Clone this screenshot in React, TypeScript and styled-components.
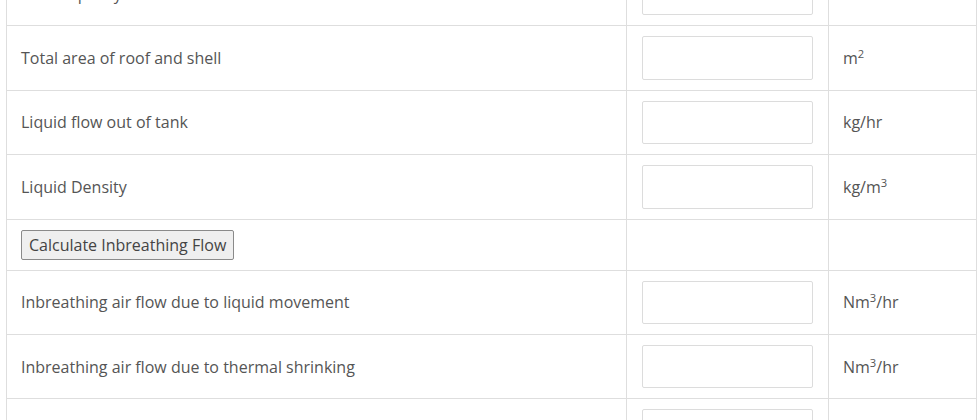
import React from 'react'
import styled, { createGlobalStyle } from 'styled-components'

interface Row {
  label: string
  unit?: React.ReactNode
  button?: string
}

const rows: Row[] = [
  { label: 'Tank capacity', unit: <>m<sup>3</sup></> },
  { label: 'Total area of roof and shell', unit: <>m<sup>2</sup></> },
  { label: 'Liquid flow out of tank', unit: 'kg/hr' },
  { label: 'Liquid Density', unit: <>kg/m<sup>3</sup></> },
  { label: '', button: 'Calculate Inbreathing Flow' },
  { label: 'Inbreathing air flow due to liquid movement', unit: <>Nm<sup>3</sup>/hr</> },
  { label: 'Inbreathing air flow due to thermal shrinking', unit: <>Nm<sup>3</sup>/hr</> },
  { label: 'Total inbreathing air flow', unit: <>Nm<sup>3</sup>/hr</> },
]

export default function App() {
  return (
    <>
      <GlobalStyle />
      <Wrapper>
        <Table>
          <colgroup>
            <col style={{ width: 620 }} />
            <col style={{ width: 202 }} />
            <col />
          </colgroup>
          <tbody>
            {rows.map((row, i) =>
              row.button ? (
                <tr key={i}>
                  <Cell>
                    <Button type="button">{row.button}</Button>
                  </Cell>
                  <Cell />
                  <Cell />
                </tr>
              ) : (
                <tr key={i}>
                  <Cell>{row.label}</Cell>
                  <Cell>
                    <Input type="text" />
                  </Cell>
                  <Cell>{row.unit}</Cell>
                </tr>
              )
            )}
          </tbody>
        </Table>
      </Wrapper>
    </>
  )
}

const GlobalStyle = createGlobalStyle`
  body {
    margin: 0;
    background: #fff;
    font-family: 'Open Sans', 'Liberation Sans', sans-serif;
    overflow: hidden;
  }
`

const Wrapper = styled.div`
  margin: -39px 4px 0 6px;
`

const Table = styled.table`
  width: 971px;
  border-collapse: collapse;
  table-layout: fixed;
  color: #555;
  font-size: 16px;
`

const Cell = styled.td`
  border: 1px solid #dedede;
  padding: 10px 14px;
  vertical-align: middle;
  line-height: 22px;
  sup {
    font-size: 70%;
    line-height: 0;
    vertical-align: 0.55em;
  }
`

const Input = styled.input`
  display: block;
  box-sizing: border-box;
  width: 171px;
  height: 43.4px;
  margin-left: 1px;
  border: 1px solid #dcdcdc;
  border-radius: 2px;
  background: #fff;
  outline: none;
`

const Button = styled.button`
  display: block;
  height: 30px;
  padding: 0 7px;
  font-family: 'Open Sans', 'Liberation Sans', sans-serif;
  font-size: 16px;
  color: #444;
  background: #efefef;
  border: 1px solid #8a8a8a;
  border-radius: 2px;
`
